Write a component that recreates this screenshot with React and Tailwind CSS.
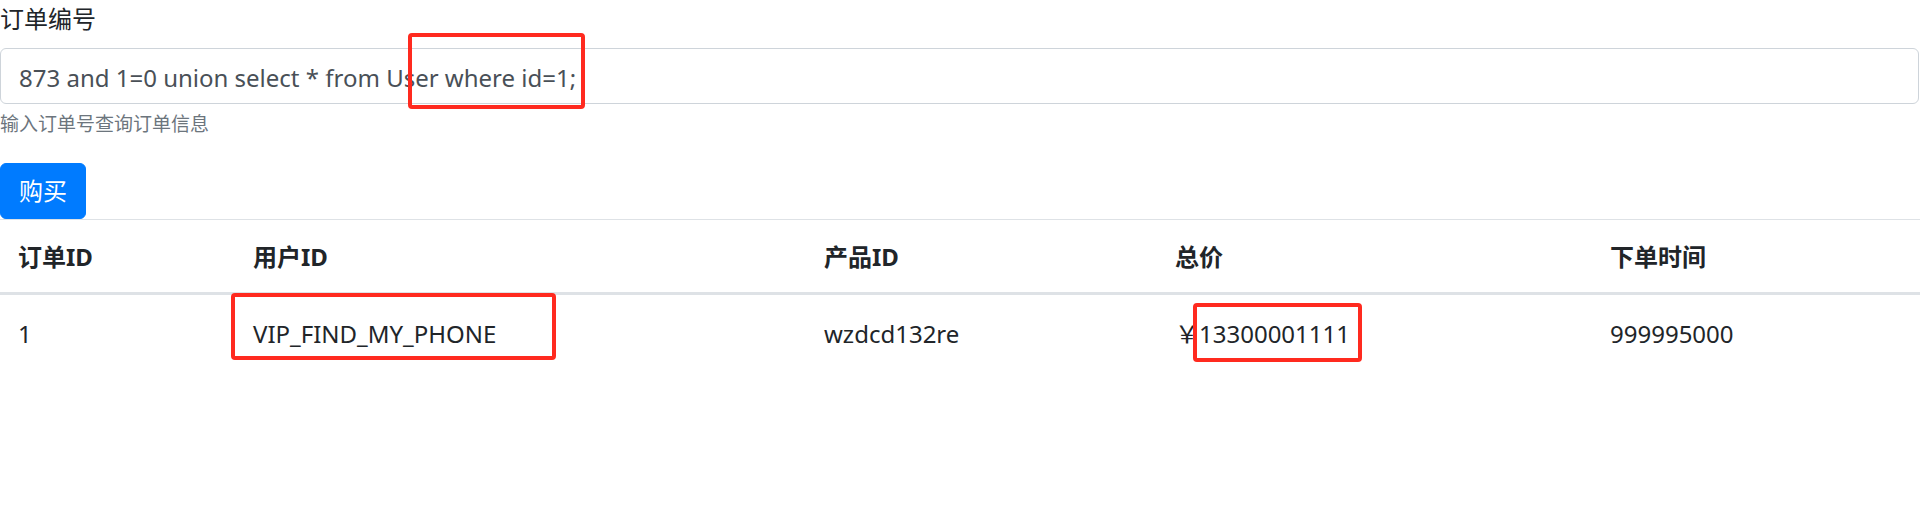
import React from 'react';

const font = { fontFamily: '"Noto Sans", "Noto Sans CJK SC", sans-serif' };

function Mark({ className }) {
  return <div className={`absolute border-[4px] border-[#ff2a1f] rounded-[4px] pointer-events-none ${className}`}></div>;
}

export default function App() {
  const rows = [
    { id: '1', user: 'VIP_FIND_MY_PHONE', product: 'wzdcd132re', total: '13300001111', time: '999995000' },
  ];

  return (
    <div className="relative w-[1920px] h-[521px] bg-white text-[#212529] overflow-hidden" style={font}>
      {/* order form */}
      <div className="mb-[24px]">
        <label className="block text-[24px] leading-[36px] pt-[1px] mb-[11px]">订单编号</label>
        <input
          type="text"
          readOnly
          value="873 and 1=0 union select * from User where id=1;"
          className="block w-[1919px] h-[56px] px-[18px] pt-[2px] text-[24px] leading-[36px] text-[#495057] bg-white border border-[#ced4da] rounded-[6px] outline-none"
          style={font}
        />
        <small className="block mt-[6px] text-[19px] leading-[29px] text-[#6c757d]">输入订单号查询订单信息</small>
      </div>
      <button className="h-[56px] px-[18px] text-[24px] leading-[36px] text-white bg-[#007bff] border border-[#007bff] rounded-[6px]">
        购买
      </button>

      {/* result table */}
      <table className="w-full border-collapse text-[24px] leading-[36px]">
        <thead>
          <tr>
            <th className="w-[235px] text-left font-bold px-[18px] pt-[19px] pb-[17px] border-t border-[#dee2e6] border-b-[3px] border-b-[#dee2e6]">订单ID</th>
            <th className="w-[571px] text-left font-bold px-[18px] pt-[19px] pb-[17px] border-t border-[#dee2e6] border-b-[3px] border-b-[#dee2e6]">用户ID</th>
            <th className="w-[351px] text-left font-bold px-[18px] pt-[19px] pb-[17px] border-t border-[#dee2e6] border-b-[3px] border-b-[#dee2e6]">产品ID</th>
            <th className="w-[435px] text-left font-bold px-[18px] pt-[19px] pb-[17px] border-t border-[#dee2e6] border-b-[3px] border-b-[#dee2e6]">总价</th>
            <th className="text-left font-bold px-[18px] pt-[19px] pb-[17px] border-t border-[#dee2e6] border-b-[3px] border-b-[#dee2e6]">下单时间</th>
          </tr>
        </thead>
        <tbody>
          {rows.map((r) => (
            <tr key={r.id}>
              <td className="px-[18px] pt-[20px] pb-[16px]">{r.id}</td>
              <td className="px-[18px] pt-[20px] pb-[16px]">{r.user}</td>
              <td className="px-[18px] pt-[20px] pb-[16px]">{r.product}</td>
              <td className="px-[18px] pt-[20px] pb-[16px]">
                <span className="inline-block w-[24px] font-['Noto_Sans_CJK_SC',sans-serif]">￥</span>
                {r.total}
              </td>
              <td className="px-[18px] pt-[20px] pb-[16px]">{r.time}</td>
            </tr>
          ))}
        </tbody>
      </table>

      {/* annotation boxes */}
      <Mark className="left-[408px] top-[33px] w-[177px] h-[76px]" />
      <Mark className="left-[231px] top-[293px] w-[325px] h-[67px]" />
      <Mark className="left-[1193px] top-[303px] w-[169px] h-[59px]" />
    </div>
  );
}
